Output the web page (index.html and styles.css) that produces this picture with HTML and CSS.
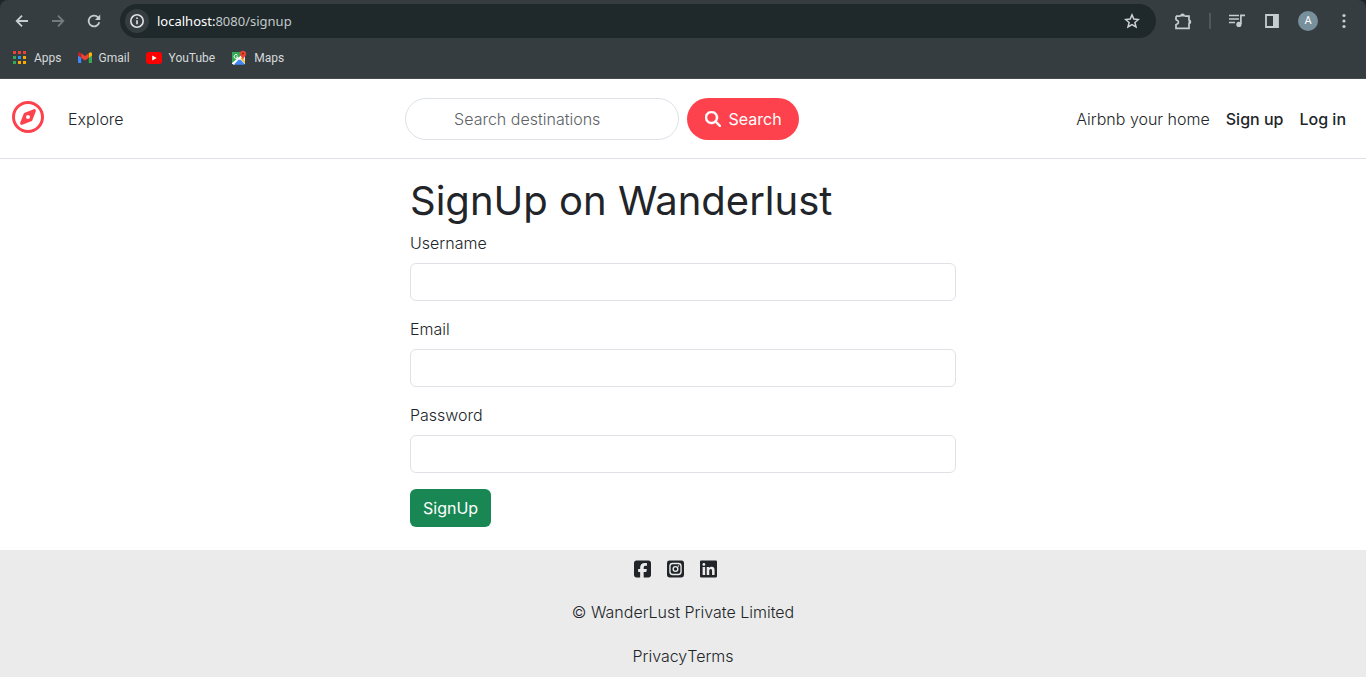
FILE: index.html
```html
<!DOCTYPE html>
<html lang="en">
<head>
<meta charset="utf-8">
<meta name="viewport" content="width=device-width, initial-scale=1">
<title>SignUp on Wanderlust</title>
<link rel="stylesheet" href="styles.css">
</head>
<body>
<div class="chrome">
  <div class="toolbar">
    <div class="history">
      <button class="tool" aria-label="Back"><svg width="16" height="16" viewBox="0 0 16 16" fill="none" stroke="#c7cdce" stroke-width="1.8"><path d="M14 8H3M8 2.7 2.7 8 8 13.3"/></svg></button>
      <button class="tool" aria-label="Forward"><svg width="16" height="16" viewBox="0 0 16 16" fill="none" stroke="#757b7d" stroke-width="1.8"><path d="M2 8h11M8 2.7 13.3 8 8 13.3"/></svg></button>
      <button class="tool" aria-label="Reload"><svg width="16" height="16" viewBox="0 0 16 16" fill="none" stroke="#c7cdce" stroke-width="1.8"><path d="M13.3 9.3A5.4 5.4 0 1 1 12 4.3L13.6 6"/><path d="M14.2 1.6v5.3H9z" fill="#c7cdce" stroke="none"/></svg></button>
    </div>
    <div class="omnibox">
      <span class="site-info"><svg width="16" height="16" viewBox="0 0 16 16" fill="none" stroke="#dfe3e4" stroke-width="1.6"><circle cx="8" cy="8" r="6.2"/><path d="M8 7.2v4M8 4.4v1.7"/></svg></span>
      <span class="url"><b>localhost:</b>8080/signup</span>
      <button class="tool" aria-label="Bookmark this page"><svg width="16" height="16" viewBox="0 0 16 16" fill="none" stroke="#cdd2d3" stroke-width="1.5"><path d="m8 1.9 1.8 4.2 4.6.4-3.5 3 1.1 4.5L8 11.6 4 14l1.1-4.5-3.5-3 4.6-.4z"/></svg></button>
    </div>
    <div class="actions">
      <button class="tool" aria-label="Extensions"><svg width="18" height="18" viewBox="0 0 18 18"><path d="M2 4.2h4.5M10.7 4.2H15v4M15 11.3v5H2v-4.4M2 8.3V4.2" fill="none" stroke="#c7cdce" stroke-width="1.7"/><path d="M2 8c3.2.4 3.2 3.9 0 4.3" fill="none" stroke="#c7cdce" stroke-width="1.6"/><path d="M6 4.500a2.300 2.800 0 0 1 5 0zM14.500 7.500a2.600 2.300 0 0 1 0 4.800z" fill="#c7cdce"/></svg></button>
      <span class="divider"></span>
      <button class="tool" aria-label="Media controls"><svg width="18" height="16" viewBox="0 0 18 16" fill="none" stroke="#c7cdce" stroke-width="1.7"><path d="M1 2.500h10M1 6h10M1 9.500h6M12.900 11V2.400H17"/><circle cx="10.900" cy="11.400" r="2.600" fill="#c7cdce" stroke="none"/></svg></button>
      <button class="tool" aria-label="Side panel"><svg width="16" height="16" viewBox="0 0 16 16"><path d="M2 2h12v12H2z" fill="none" stroke="#c7cdce" stroke-width="1.8"/><path d="M9 2h5v12H9z" fill="#c7cdce"/></svg></button>
      <button class="profile" aria-label="Profile">A</button>
      <button class="tool" aria-label="Menu"><svg width="16" height="16" viewBox="0 0 16 16" fill="#c7cdce"><circle cx="8" cy="2.500" r="1.600"/><circle cx="8" cy="8" r="1.600"/><circle cx="8" cy="13.500" r="1.600"/></svg></button>
    </div>
  </div>
  <div class="bookmarks">
    <a class="bookmark" href="#"><svg width="14" height="14" viewBox="0 0 14 14"><path d="M0 0h3v3H0zM5 0h3v3H5zM10 0h3v3h-3z" fill="#ea4335"/><path d="M0 5h3v3H0zM0 10h3v3H0z" fill="#34a853"/><path d="M5 5h3v3H5z" fill="#2196f3"/><path d="M10 5h3v3h-3zM5 10h3v3H5zM10 10h3v3h-3z" fill="#f9ab00"/></svg>Apps</a>
    <a class="bookmark" href="#"><svg width="14" height="12" viewBox="0 0 14 12"><path d="M0 2v8.500q0 .5.6.5H3.200V4z" fill="#4285f4"/><path d="M14 2v8.500q0 .5-.6.5H10.800V4z" fill="#34a853"/><path d="M10.800 1.200Q13.500-.8 14 1.800V3.500L10.800 5.800z" fill="#fbbc04"/><path d="M0 1.800Q.5-.8 3.200 1.200V5.800L0 3.500z" fill="#c5221f"/><path d="M3.200 1.200 7 4l3.800-2.800v4.600L7 8.500 3.200 5.800z" fill="#ea4335"/></svg>Gmail</a>
    <a class="bookmark" href="#"><svg width="16" height="12" viewBox="0 0 16 12"><rect width="16" height="12" rx="3" fill="#f00"/><path d="m6.200 3.500 4.500 2.500-4.500 2.500z" fill="#fff"/></svg>YouTube</a>
    <a class="bookmark" href="#"><svg width="16" height="16" viewBox="0 0 16 16"><path d="M1 2h13v12H1z" fill="#e8eaed"/><path d="M1 2h9.500L11 5 1 13z" fill="#34a853"/><path d="M2 14.500 8 8l6 6.500z" fill="#4285f4"/><path d="m1 13.500 10-9 1.500 2.500L3 15z" fill="#fff"/><path d="M3 14.500 8 9.300l5 5.200z" fill="#4285f4"/><path d="m9.500 8.500 1.500-1.300 3 4.300v2z" fill="#fbbc04"/><path d="M6.500 5.200A2 2 0 1 0 7 7H5.200" fill="none" stroke="#fff" stroke-width="1"/><path d="M8.800 3.300a3.300 3.300 0 0 1 6.400 0c.2 2.700-2.200 3.200-3.200 6.500-1-3.300-3.400-3.800-3.200-6.500z" fill="#ea4335"/><circle cx="12" cy="3.600" r="1.100" fill="#a52714"/></svg>Maps</a>
  </div>
</div>

<nav class="navbar">
  <div class="nav-group nav-start">
    <a class="brand" href="#" aria-label="Wanderlust"><svg width="32" height="32" viewBox="0 0 512 512" fill="currentColor"><path d="M464 256A208 208 0 1 0 48 256a208 208 0 1 0 416 0zM0 256a256 256 0 1 1 512 0A256 256 0 1 1 0 256zm306.7 69.1L162.4 380.6c-19.4 7.5-38.5-11.6-31-31l55.5-144.3c3.3-8.5 9.900-15.100 18.400-18.400l144.300-55.500c19.400-7.500 38.500 11.600 31 31L325.100 306.700c-3.200 8.500-9.900 15.100-18.400 18.400zM288 256a32 32 0 1 0 -64 0 32 32 0 1 0 64 0z"/></svg></a>
    <a class="nav-link" href="#">Explore</a>
  </div>
  <form class="search">
    <input class="search-input" type="search" placeholder="Search destinations" aria-label="Search destinations">
    <button class="search-button" type="button"><svg width="16" height="16" viewBox="0 0 512 512" fill="currentColor" stroke="currentColor" stroke-width="14"><path d="M416 208c0 45.900-14.900 88.300-40 122.700L502.600 457.400c12.500 12.500 12.500 32.800 0 45.300s-32.800 12.500-45.300 0L330.700 376c-34.400 25.200-76.800 40-122.700 40C93.100 416 0 322.900 0 208S93.100 0 208 0S416 93.100 416 208zM208 352a144 144 0 1 0 0-288 144 144 0 1 0 0 288z"/></svg>Search</button>
  </form>
  <div class="nav-group">
    <a class="nav-link" href="#">Airbnb your home</a>
    <a class="nav-link strong" href="#">Sign up</a>
    <a class="nav-link strong" href="#">Log in</a>
  </div>
</nav>

<main class="content">
  <form class="signup">
    <h1 class="title">SignUp on Wanderlust</h1>
    <div class="field"><label for="username">Username</label><input id="username" type="text"></div>
    <div class="field"><label for="email">Email</label><input id="email" type="email"></div>
    <div class="field"><label for="password">Password</label><input id="password" type="password"></div>
    <button class="submit" type="button">SignUp</button>
  </form>
</main>

<footer class="footer">
  <div class="socials">
    <a href="#" aria-label="Facebook"><svg width="17" height="20" viewBox="0 0 448 512" fill="currentColor"><path d="M64 32C28.700 32 0 60.700 0 96V416c0 35.300 28.700 64 64 64h98.200V334.200H109.400V256h52.800V222.300c0-87.100 39.400-127.500 125-127.500c16.200 0 44.200 3.200 55.700 6.400V172c-6-.6-16.500-1-29.600-1c-42 0-58.200 15.900-58.200 57.200V256h83.600l-14.400 78.200H255V480H384c35.300 0 64-28.700 64-64V96c0-35.300-28.700-64-64-64H64z"/></svg></a>
    <a href="#" aria-label="Instagram"><svg width="17" height="20" viewBox="0 0 448 512"><rect y="32" width="448" height="448" rx="64" fill="currentColor"/><g fill="none" stroke="#ebebeb" stroke-width="36"><rect x="78" y="110" width="292" height="292" rx="72"/><circle cx="224" cy="256" r="62"/></g><circle cx="302" cy="178" r="19" fill="#ebebeb"/></svg></a>
    <a href="#" aria-label="LinkedIn"><svg width="17" height="20" viewBox="0 0 448 512" fill="currentColor"><path d="M416 32H31.900C14.300 32 0 46.500 0 64.300v383.400C0 465.500 14.300 480 31.900 480H416c17.600 0 32-14.500 32-32.300V64.300c0-17.800-14.400-32.300-32-32.300zM135.400 416H69V202.200h66.500V416zm-33.200-243c-21.300 0-38.500-17.300-38.500-38.500S80.900 96 102.200 96c21.200 0 38.500 17.300 38.500 38.500 0 21.300-17.200 38.500-38.500 38.500zm282.100 243h-66.400V312c0-24.800-.5-56.700-34.500-56.700-34.600 0-39.900 27-39.900 54.900V416h-66.400V202.200h63.700v29.200h.9c8.900-16.800 30.600-34.500 62.900-34.500 67.200 0 79.700 44.300 79.700 101.900V416z"/></svg></a>
  </div>
  <div>© WanderLust Private Limited</div>
  <div class="legal"><a href="#">Privacy</a><a href="#">Terms</a></div>
</footer>
</body>
</html>
```
FILE: styles.css
```css
* { box-sizing: border-box; }

html { background: #1f2629; }

body {
  margin: 0;
  min-height: 100vh;
  display: flex;
  flex-direction: column;
  color: #212529;
  font: 300 16px/24px Inter, "Open Sans", sans-serif;
}

a { color: inherit; text-decoration: none; }
button, input { font: inherit; color: inherit; }
button { border: 0; padding: 0; background: none; cursor: pointer; }
svg { display: block; flex: none; }

/* Browser bar */
.chrome {
  height: 79px;
  padding-top: 4px;
  background: #363d40;
  border-radius: 8px 8px 0 0;
  border-bottom: 1px solid #454b4e;
  font: 400 12px/16px Roboto, "Noto Sans", sans-serif;
  color: #d5d9da;
}
.toolbar { display: flex; align-items: center; height: 34px; padding: 0 14px; }
.history { display: flex; gap: 20px; padding-right: 18px; }
.omnibox {
  flex: 1;
  display: flex;
  align-items: center;
  gap: 8px;
  height: 34px;
  padding: 0 16px 0 5px;
  border-radius: 17px;
  background: #1f282b;
}
.site-info {
  display: grid;
  place-items: center;
  width: 24px;
  height: 24px;
  border-radius: 50%;
  background: #363d40;
}
.url { flex: 1; font-family: "Noto Sans", sans-serif; font-size: 13px; color: #c3c8ca; }
.url b { font-weight: 400; color: #fff; }
.actions { display: flex; align-items: center; gap: 18px; padding-left: 18px; }
.divider { width: 2px; height: 16px; margin: 0 -1px; background: #50585b; }
.profile {
  width: 20px;
  height: 20px;
  border-radius: 50%;
  background: #78909c;
  color: #fff;
  font-size: 11px;
  line-height: 20px;
}
.bookmarks { display: flex; gap: 16px; height: 40px; padding: 0 13px; align-items: center; }
.bookmark { display: flex; align-items: center; gap: 7px; }

/* Site navigation */
.navbar {
  display: flex;
  align-items: center;
  justify-content: space-between;
  min-height: 80px;
  padding: 0 12px;
  background: #fff;
  border-bottom: 1px solid #dee2e6;
}
.nav-group { display: flex; align-items: center; }
.nav-start { min-width: 124px; }
.brand { margin-right: 16px; padding-bottom: 4px; color: #fe424d; }
.nav-link { padding: 8px; }
.strong { font-weight: 500; }
.search { display: flex; gap: 8px; }
.search-input {
  width: 274px;
  height: 42px;
  padding: 0 48px;
  border: 1px solid #dee2e6;
  border-radius: 21px;
  background: #fff;
  appearance: none;
}
.search-input::placeholder { color: #5d6267; opacity: 1; }
.search-button {
  display: flex;
  align-items: center;
  justify-content: center;
  gap: 8px;
  width: 112px;
  height: 42px;
  border-radius: 21px;
  background: #fe424d;
  color: #fff;
  font-weight: 400;
}

/* Sign-up form */
.content { flex: 1; padding: 16px 12px; background: #fff; }
.signup { width: 546px; max-width: 100%; margin: 0 auto; }
.title { margin: 0 0 4px; font-size: 40px; line-height: 52px; font-weight: 400; }
.field { display: flex; flex-direction: column; gap: 8px; margin-bottom: 16px; }
.field input {
  width: 100%;
  height: 38px;
  padding: 6px 12px;
  border: 1px solid #dee2e6;
  border-radius: 6px;
  background: #fff;
}
.submit {
  height: 38px;
  padding: 0 13px;
  border-radius: 6px;
  background: #198754;
  color: #fff;
  font-weight: 400;
}

/* Footer */
.footer {
  display: flex;
  flex-direction: column;
  align-items: center;
  gap: 20px;
  padding: 7px 0 9px;
  background: #ebebeb;
}
.socials { display: flex; align-items: center; height: 23px; }
.socials a { margin-right: 16px; }
.legal { display: flex; }
```
